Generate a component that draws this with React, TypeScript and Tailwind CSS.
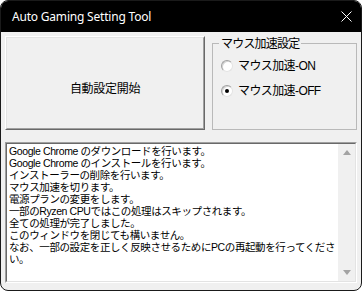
import { useState } from 'react';

const LOG_LINES = [
  'Google Chrome のダウンロードを行います。',
  'Google Chrome のインストールを行います。',
  'インストーラーの削除を行います。',
  'マウス加速を切ります。',
  '電源プランの変更をします。',
  '一部のRyzen CPUではこの処理はスキップされます。',
  '全ての処理が完了しました。',
  'このウィンドウを閉じても構いません。',
  'なお、一部の設定を正しく反映させるためにPCの再起動を行ってくださ',
  'い。',
];

const jp = "font-['Noto_Sans_CJK_JP',sans-serif]";
const mixed = "font-['Liberation_Sans','Noto_Sans_CJK_JP',sans-serif]";

function Radio({ label, checked, onSelect }: { label: string; checked: boolean; onSelect: () => void }) {
  return (
    <button onClick={onSelect} className="flex h-[14px] items-center gap-[5px] text-left">
      <span className="flex h-[12px] w-[12px] items-center justify-center rounded-full border border-t-[#a0a0a0] border-l-[#a0a0a0] border-b-[#e3e3e3] border-r-[#e3e3e3] bg-white shadow-[inset_1px_1px_0_#d4d4d4]">
        {checked && <span className="h-[4px] w-[4px] rounded-full bg-black" />}
      </span>
      <span className={`${mixed} text-[12px] leading-[14px] tracking-[-0.6px] text-black`}>{label}</span>
    </button>
  );
}

function Arrow({ up }: { up?: boolean }) {
  return (
    <div className="flex h-[17px] w-[17px] items-center justify-center">
      <svg width="8" height="5" viewBox="0 0 8 5">
        <path d={up ? 'M0 5 L4 0 L8 5 Z' : 'M0 0 L4 5 L8 0 Z'} fill="#a3a3a3" />
      </svg>
    </div>
  );
}

export default function App() {
  const [accel, setAccel] = useState<'on' | 'off'>('off');

  return (
    <div className="h-[291px] w-[362px] bg-white">
      <div className="flex h-full flex-col overflow-hidden rounded-lg border border-[#1a1a1a] bg-[#f0f0f0]">
        <div className="flex h-[31px] shrink-0 items-center justify-between bg-black pl-[11px] pr-[9px]">
          <span className="font-['Noto_Sans',sans-serif] text-[12px] leading-none tracking-[-0.2px] text-white">
            Auto Gaming Setting Tool
          </span>
          <svg width="11" height="11" viewBox="0 0 11 11">
            <path d="M0.5 0.5 L10.5 10.5 M10.5 0.5 L0.5 10.5" stroke="white" strokeWidth="1" />
          </svg>
        </div>

        <div className="flex flex-col pl-[4px] pr-[3px] pt-[4px]">
          <div className="flex items-start">
            <button className="h-[94px] w-[200px] border border-t-white border-l-white border-b-[#696969] border-r-[#696969]">
              <div className="flex h-full w-full items-center justify-center border border-t-[#e3e3e3] border-l-[#e3e3e3] border-b-[#a0a0a0] border-r-[#a0a0a0] pt-[10px]">
                <span className={`${jp} text-[12px] leading-[14px] tracking-[-0.3px] text-black`}>自動設定開始</span>
              </div>
            </button>

            <fieldset className="ml-[7px] h-[94px] w-[145px] border border-[#b9b9b9] pl-[8px]">
              <legend className={`${jp} -ml-[2px] px-[2px] text-[12px] leading-[14px] tracking-[-0.8px] text-black`}>
                マウス加速設定
              </legend>
              <div className="mt-[9px] flex flex-col gap-[11px]">
                <Radio label="マウス加速-ON" checked={accel === 'on'} onSelect={() => setAccel('on')} />
                <Radio label="マウス加速-OFF" checked={accel === 'off'} onSelect={() => setAccel('off')} />
              </div>
            </fieldset>
          </div>

          <div className="mt-[12px] h-[141px] w-[352px] border border-t-[#a0a0a0] border-l-[#a0a0a0] border-b-white border-r-white">
            <div className="flex h-full w-full border border-t-[#696969] border-l-[#696969] border-b-[#e3e3e3] border-r-[#e3e3e3] bg-white">
              <div className={`${mixed} flex-1 overflow-hidden pl-[2px] pt-[1px] text-[10.5px] leading-[12px] tracking-[-0.4px] text-black`}>
                {LOG_LINES.map((line, i) => (
                  <div key={i} className="h-[12px] whitespace-nowrap">{line}</div>
                ))}
              </div>
              <div className="flex w-[17px] flex-col justify-between bg-[#f0f0f0]">
                <Arrow up />
                <Arrow />
              </div>
            </div>
          </div>
        </div>
      </div>
    </div>
  );
}
